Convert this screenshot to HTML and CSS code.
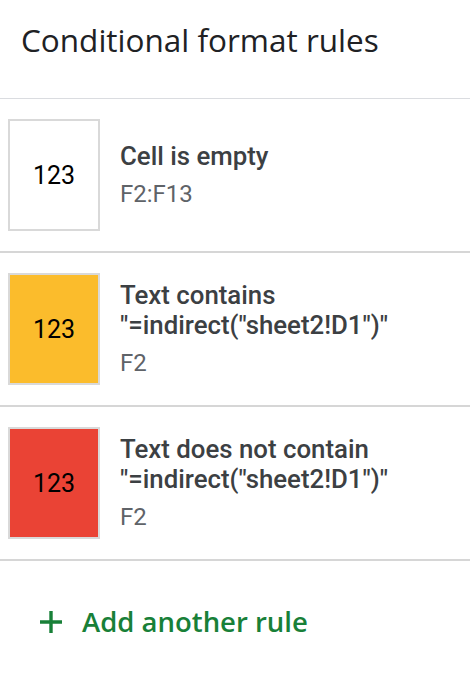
FILE: index.html
```html
<!DOCTYPE html>
<html>
<head>
<meta charset="utf-8">
<link rel="stylesheet" href="styles.css">
</head>
<body>
<div class="panel">
  <div class="header"><h1 class="title">Conditional format rules</h1></div>
  <div class="rule">
    <div class="swatch">123</div>
    <div class="info">
      <div class="cond">Cell is empty</div>
      <div class="range">F2:F13</div>
    </div>
  </div>
  <div class="rule">
    <div class="swatch yellow">123</div>
    <div class="info">
      <div class="cond">Text contains<br>"=indirect("sheet2!D1")"</div>
      <div class="range">F2</div>
    </div>
  </div>
  <div class="rule">
    <div class="swatch red">123</div>
    <div class="info">
      <div class="cond">Text does not contain<br>"=indirect("sheet2!D1")"</div>
      <div class="range">F2</div>
    </div>
  </div>
  <div class="add">
    <svg class="plus" width="22" height="22" viewBox="0 0 22 22"><path d="M9.3 0h3.4v22H9.3zM0 9.3h22v3.4H0z" fill="#188038"/></svg>
    <span class="add-label">Add another rule</span>
  </div>
</div>
</body>
</html>
```
FILE: styles.css
```css
html, body { margin: 0; padding: 0; background: #fff; }
.panel { width: 470px; }
.header {
  border-bottom: 1px solid #dadce0;
  padding-left: 21px;
  box-sizing: border-box;
  height: 99px;
}
.title {
  margin: 0;
  padding-top: 20px;
  font-family: "Open Sans", sans-serif;
  font-weight: 500;
  font-size: 31.5px;
  line-height: 40px;
  color: #202124;
}
.rule {
  display: flex;
  align-items: center;
  height: 154px;
  box-sizing: border-box;
  border-bottom: 2px solid #d6d6d6;
  padding-left: 8px;
}
.swatch {
  width: 92px;
  height: 112px;
  box-sizing: border-box;
  border: 2px solid #d9d9d9;
  display: flex;
  align-items: center;
  justify-content: center;
  font-family: Roboto, sans-serif;
  font-size: 25px;
  color: #000;
  flex: none;
}
.yellow { background: #fbbc2c; }
.red { background: #ea4335; }
.info { margin-left: 20px; font-family: Roboto, sans-serif; }
.cond { font-size: 25.8px; line-height: 30px; font-weight: 500; color: #3c4043; }
.range { font-size: 24px; line-height: 30px; margin-top: 8px; color: #5f6368; }
.add {
  display: flex;
  align-items: center;
  padding-left: 40px;
  padding-top: 42px;
}
.plus { flex: none; }
.add-label {
  margin-left: 20px;
  font-family: "Open Sans", sans-serif;
  font-weight: 600;
  font-size: 27.5px;
  color: #188038;
}
```
